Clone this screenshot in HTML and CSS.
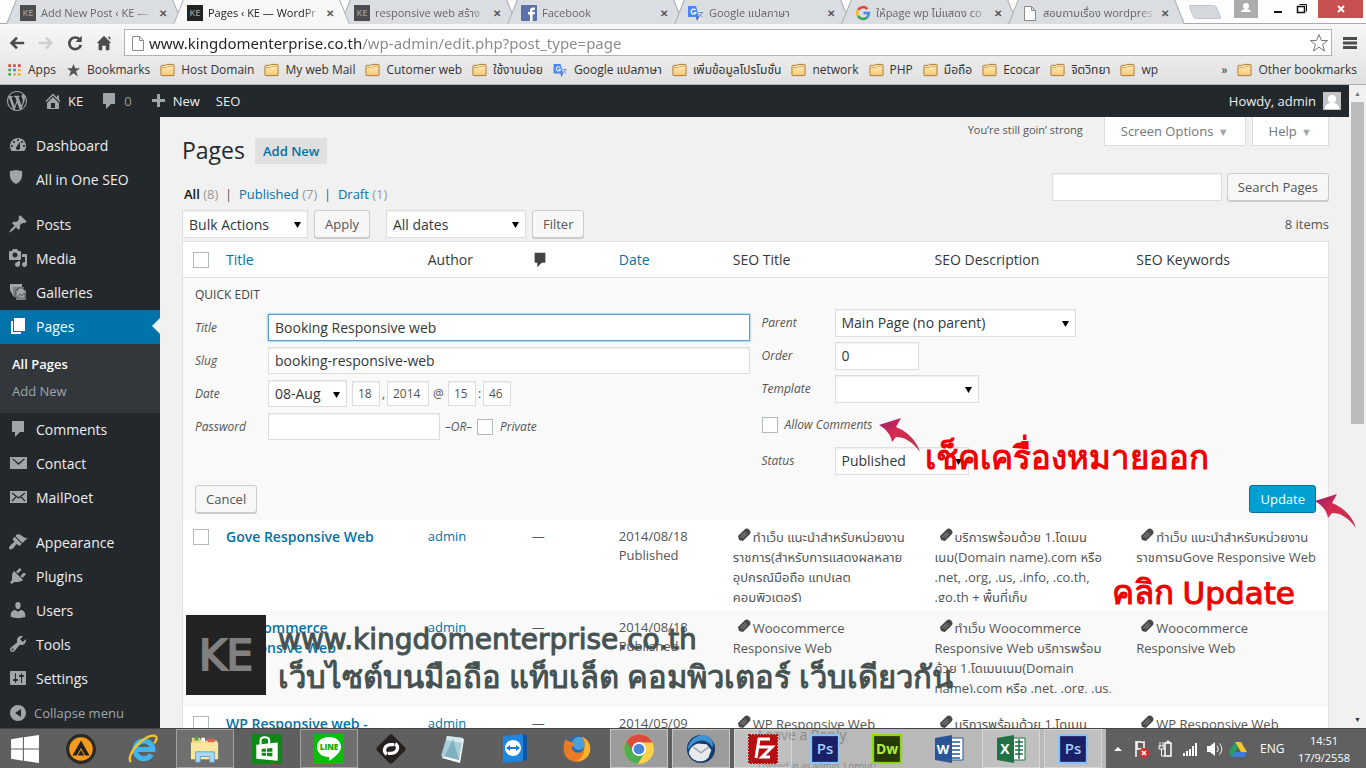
FILE: index.html
```
<!DOCTYPE html>
<html lang="th">
<head>
    <meta charset="UTF-8">
    <meta name="viewport" content="width=device-width, initial-scale=1.0">
    <title>Pages ‹ KE — WordPress</title>
    <link rel="stylesheet" href="styles.css">
</head>
<body>
    <!-- shared icons -->
    <svg class="sprite" aria-hidden="true">
        <defs>
            <linearGradient id="folder-fill" x1="0" y1="0" x2="0" y2="1">
                <stop offset="0" stop-color="#fff0c4"/>
                <stop offset="1" stop-color="#f9c873"/>
            </linearGradient>
            <linearGradient id="arrow-fill" x1="0" y1="0" x2="1" y2="1">
                <stop offset="0" stop-color="#8d1c74"/>
                <stop offset="0.4" stop-color="#d72b50"/>
                <stop offset="1" stop-color="#b8324a"/>
            </linearGradient>
            <symbol id="folder" viewBox="0 0 16 14">
                <path d="M1 12V3a1 1 0 0 1 1-1h4l1-1h7a1 1 0 0 1 1 1v10a1 1 0 0 1-1 1H2a1 1 0 0 1-1-1z" fill="url(#folder-fill)" stroke="#a9742b"/>
                <path d="M2 4.500h4.500l1.500-1.500h6" fill="none" stroke="#d9a04f"/>
            </symbol>
            <symbol id="file" viewBox="0 0 12 16">
                <path d="M.5 1.500h7l4 4v10H.5zM7.500 1.500v4h4" fill="#fff" stroke="#8a8a8a"/>
            </symbol>
            <symbol id="translate" viewBox="0 0 16 16">
                <path d="M7 5h8v10h-5z" fill="#dfe3ea"/>
                <path d="M0 1h8l3 11H1a1 1 0 0 1-1-1z" fill="#4a86f0"/>
                <path d="M8 12h3l-2 4z" fill="#2f5fc4"/>
                <path d="M7.500 5A2.500 2.500 0 1 0 8 7.500H5.700" fill="none" stroke="#fff" stroke-width="1.200"/>
                <path d="M10.500 7.500H15M12.800 7v1M14 8l-3 4M11.500 9l3 3" stroke="#6d8cc4" fill="none"/>
            </symbol>
            <symbol id="comment" viewBox="0 0 20 20">
                <path d="M5 2h10c1 0 1 .5 1 1v9c0 1 0 1-1 1h-3l-5 5v-5H5c-1 0-1-.5-1-1V3c0-1 0-1 1-1z" fill="currentColor"/>
            </symbol>
            <symbol id="clip" viewBox="0 0 14 14">
                <g transform="rotate(-45 7 7)">
                    <path d="M0 7l2-3.500h9a3.500 3.500 0 0 1 0 7H2z" fill="#484848"/>
                    <path d="M3 6h7M4 8h6" stroke="#ccc" stroke-width=".6"/>
                </g>
            </symbol>
            <symbol id="pointer" viewBox="0 0 44 36">
                <path d="M1 8L23 1l-5 9c10 4 20 12 24 25-8-11-16-15-24-15l-4 5c-1-7-6-13-13-17z" fill="url(#arrow-fill)"/>
            </symbol>
            <symbol id="photoshop" viewBox="0 0 28 28">
                <rect width="28" height="28" fill="#86c5fb"/>
                <rect x="2" y="2" width="24" height="24" fill="#1b1f66"/>
                <text x="14" y="19" text-anchor="middle" font-family="Open Sans" font-size="14" font-weight="600" fill="#9ed0ff">Ps</text>
            </symbol>
        </defs>
    </svg>

    <div class="screen">
        <!-- browser tabs -->
        <header class="tab-strip">
            <nav class="tabs" aria-label="Tabs">
                <a class="tab" href="#"><span class="favicon">KE</span><span class="tab-title">Add New Post ‹ KE —</span><span class="tab-close">✕</span></a>
                <a class="tab tab-active" href="#"><span class="favicon">KE</span><span class="tab-title">Pages ‹ KE — WordPr</span><span class="tab-close">✕</span></a>
                <a class="tab" href="#"><span class="favicon">KE</span><span class="tab-title">responsive web สร้าง</span><span class="tab-close">✕</span></a>
                <a class="tab" href="#"><svg class="favicon-svg" viewBox="0 0 16 16"><rect width="16" height="16" rx="1" fill="#5b71a9"/><path d="M9 16V9.500H7V7h2V5.500C9 3.500 10 2.500 12 2.500h2V5h-1.500c-.7 0-1 .3-1 1v1H14l-.4 2.500h-2V16z" fill="#fff"/></svg><span class="tab-title">Facebook</span><span class="tab-close">✕</span></a>
                <a class="tab" href="#"><svg class="favicon-svg"><use href="#translate"/></svg><span class="tab-title">Google แปลภาษา</span><span class="tab-close">✕</span></a>
                <a class="tab" href="#"><svg class="favicon-svg" viewBox="0 0 16 16" fill="none" stroke-width="2.500"><path d="M12.500 4A6 6 0 0 0 3 5" stroke="#e0443a"/><path d="M3 5a6 6 0 0 0 0 6" stroke="#f5b92e"/><path d="M3 11a6 6 0 0 0 9 1.500" stroke="#3aa757"/><path d="M12 12.500A6 6 0 0 0 13.800 8H8.500" stroke="#4a86f0"/></svg><span class="tab-title">ให้page wp ไม่แสดง co</span><span class="tab-close">✕</span></a>
                <a class="tab" href="#"><svg class="favicon-svg"><use href="#file"/></svg><span class="tab-title">สอบถามเรื่อง wordpres</span><span class="tab-close">✕</span></a>
                <button class="new-tab" aria-label="New tab"></button>
            </nav>
            <div class="window-buttons">
                <button class="win-user" aria-label="User"><svg viewBox="0 0 24 18"><circle cx="12" cy="6" r="3" fill="#fff"/><path d="M7 12c0-4 10-4 10 0z" fill="#fff"/></svg></button>
                <button aria-label="Minimize"><svg viewBox="0 0 24 18"><path d="M8 12h8" stroke="#111" stroke-width="2"/></svg></button>
                <button aria-label="Restore"><svg viewBox="0 0 24 18" fill="none" stroke="#111"><path d="M7.500 6.500h7v6h-7z" stroke-width="1.500"/><path d="M9.500 4.500h7v7"/></svg></button>
                <button class="win-close" aria-label="Close"><svg viewBox="0 0 24 18"><path d="M9 6l6 6M15 6l-6 6" stroke="#fff" stroke-width="2"/></svg></button>
            </div>
        </header>

        <div class="toolbar">
            <button aria-label="Back"><svg viewBox="0 0 20 20" fill="none" stroke="#4c4c4c" stroke-width="3"><path d="M18 10H4M10 4l-6 6 6 6"/></svg></button>
            <button aria-label="Forward"><svg viewBox="0 0 20 20" fill="none" stroke="#cfcfcf" stroke-width="3"><path d="M2 10h14M10 4l6 6-6 6"/></svg></button>
            <button aria-label="Reload"><svg viewBox="0 0 20 20"><path d="M15 6a6.500 6.500 0 1 0 1.500 6" fill="none" stroke="#4c4c4c" stroke-width="3"/><path d="M17.500 2v7h-7z" fill="#4c4c4c"/></svg></button>
            <button aria-label="Home"><svg viewBox="0 0 20 20"><path d="M10 2l8 8h-2v8h-4v-5H8v5H4v-8H2zM14 3h3v4z" fill="#4c4c4c"/></svg></button>
            <div class="omnibox">
                <svg class="page-icon"><use href="#file"/></svg>
                <input type="text" class="address" aria-label="Address" value="www.kingdomenterprise.co.th/wp-admin/edit.php?post_type=page">
                <svg class="star" viewBox="0 0 20 20"><path d="M10 1.500l2.400 6h6.200l-5 4 1.900 6.500L10 14.200 4.500 18l1.900-6.500-5-4h6.200z" fill="#fff" stroke="#777"/></svg>
            </div>
            <button class="menu-button" aria-label="Menu"><svg viewBox="0 0 14 14"><path d="M0 2.500h14M0 7h14M0 11.500h14" stroke="#4c4c4c" stroke-width="3"/></svg></button>
        </div>

        <nav class="bookmarks" aria-label="Bookmarks">
            <a href="#"><svg viewBox="0 0 16 16"><path d="M1 3h3M6.500 3h3M12 3h3" stroke="#d9453d" stroke-width="3"/><path d="M1 8h3" stroke="#3aa757" stroke-width="3"/><path d="M6.500 8h3" stroke="#3d7de0" stroke-width="3"/><path d="M12 8h3" stroke="#f0b02c" stroke-width="3"/><path d="M1 13h3" stroke="#3aa757" stroke-width="3"/><path d="M6.500 13h3M12 13h3" stroke="#f0b02c" stroke-width="3"/></svg>Apps</a>
            <a href="#"><svg viewBox="0 0 16 16"><path d="M8 1l2 5h5.500L11 9.500l2 6-5-3.700-5 3.700 2-6L.5 6H6z" fill="#555"/></svg>Bookmarks</a>
            <a href="#"><svg><use href="#folder"/></svg>Host Domain</a>
            <a href="#"><svg><use href="#folder"/></svg>My web Mail</a>
            <a href="#"><svg><use href="#folder"/></svg>Cutomer web</a>
            <a href="#"><svg><use href="#folder"/></svg>ใช้งานบ่อย</a>
            <a href="#"><svg><use href="#translate"/></svg>Google แปลภาษา</a>
            <a href="#"><svg><use href="#folder"/></svg>เพิ่มข้อมูลโปรโมชั่น</a>
            <a href="#"><svg><use href="#folder"/></svg>network</a>
            <a href="#"><svg><use href="#folder"/></svg>PHP</a>
            <a href="#"><svg><use href="#folder"/></svg>มือถือ</a>
            <a href="#"><svg><use href="#folder"/></svg>Ecocar</a>
            <a href="#"><svg><use href="#folder"/></svg>จิตวิทยา</a>
            <a href="#"><svg><use href="#folder"/></svg>wp</a>
            <a class="more" href="#">»</a>
            <a class="other" href="#"><svg><use href="#folder"/></svg>Other bookmarks</a>
        </nav>

        <div class="viewport">
            <div class="admin">
                <div class="admin-bar">
                    <a href="#" aria-label="WordPress"><svg viewBox="0 0 20 20"><path d="M20 10c0-5.510-4.490-10-10-10C4.480 0 0 4.490 0 10c0 5.520 4.480 10 10 10 5.510 0 10-4.480 10-10zM7.780 15.370L4.370 6.220c.55-.02 1.170-.08 1.170-.08.5-.06.44-1.130-.06-1.110 0 0-1.450.11-2.370.11-.18 0-.37 0-.58-.01C4.120 2.690 6.870 1.110 10 1.110c2.330 0 4.450.87 6.050 2.340-.68-.11-1.650.39-1.650 1.580 0 .74.45 1.360.9 2.100.35.61.55 1.360.55 2.460 0 1.490-1.400 5-1.400 5l-3.030-8.370c.54-.02.82-.17.82-.17.5-.05.44-1.250-.06-1.220 0 0-1.440.12-2.380.12-.87 0-2.330-.12-2.330-.12-.5-.03-.56 1.200-.06 1.220l.92.08 1.260 3.410zM17.410 10c.24-.64.74-1.870.43-4.250.7 1.290 1.050 2.710 1.050 4.250 0 3.290-1.730 6.240-4.400 7.780.97-2.590 1.940-5.200 2.920-7.780zM6.100 18.090C3.120 16.650 1.110 13.530 1.110 10c0-1.300.23-2.480.72-3.590C3.250 10.300 4.670 14.200 6.100 18.090zm4.030-6.630l2.580 6.980c-.86.29-1.760.45-2.710.45-.79 0-1.570-.11-2.290-.33.81-2.380 1.620-4.740 2.420-7.100z"/></svg></a>
                    <a href="#"><svg viewBox="0 0 20 20"><path d="M16 8.500l1.530 1.530-1.060 1.060L10 4.600l-6.470 6.490-1.060-1.060L10 2.500l4 4v-2h2v4zm-6-2.460l6 5.990V18H4v-5.970zM12 17v-5H8v5h4z"/></svg>KE</a>
                    <a class="muted" href="#"><svg><use href="#comment"/></svg>0</a>
                    <a href="#"><svg viewBox="0 0 20 20"><path d="M17 8v3h-5v5H9v-5H4V8h5V3h3v5z"/></svg>New</a>
                    <a href="#">SEO</a>
                    <a class="howdy" href="#">Howdy, admin<svg class="avatar" viewBox="0 0 18 18"><rect width="18" height="18" fill="#c4c4c4"/><circle cx="9" cy="7" r="4" fill="#fff"/><path d="M2 17c0-5 3-6 7-6s7 1 7 6z" fill="#fff"/></svg></a>
                </div>

                <div class="admin-body">
                    <nav class="sidebar" aria-label="Admin menu">
                        <a href="#"><svg viewBox="0 0 20 20"><path d="M3.760 16h12.480c1.100-1.370 1.760-3.110 1.760-5 0-4.420-3.580-8-8-8s-8 3.580-8 8c0 1.890.66 3.630 1.760 5zM10 4c.55 0 1 .45 1 1s-.45 1-1 1-1-.45-1-1 .45-1 1-1zM6 6c.55 0 1 .45 1 1s-.45 1-1 1-1-.45-1-1 .45-1 1-1zm8 0c.55 0 1 .45 1 1s-.45 1-1 1-1-.45-1-1 .45-1 1-1zm-5.370 5.550L12 7v6c0 1.100-.9 2-2 2s-2-.9-2-2c0-.57.24-1.080.63-1.450zM4 10c.55 0 1 .45 1 1s-.45 1-1 1-1-.45-1-1 .45-1 1-1zm12 0c.55 0 1 .45 1 1s-.45 1-1 1-1-.45-1-1 .45-1 1-1z"/></svg>Dashboard</a>
                        <a href="#"><svg viewBox="0 0 20 20"><path d="M2 2c3 0 4-1 6-1s3 1 6 1c1 6-1 11-6 13C3 13 1 8 2 2z"/></svg>All in One SEO</a>
                        <a class="group" href="#"><svg viewBox="0 0 20 20"><path d="M10.440 3.020l1.820-1.820 6.360 6.350-1.830 1.820c-1.050-.68-2.480-.57-3.410.36l-.75.75c-.92.93-1.040 2.350-.35 3.410l-1.830 1.820-2.410-2.410-2.800 2.790c-.42.42-3.380 2.710-3.800 2.290s1.860-3.390 2.280-3.810l2.790-2.790L4.100 9.360l1.830-1.820c1.050.69 2.480.57 3.400-.36l.75-.75c.93-.92 1.050-2.350.36-3.410z"/></svg>Posts</a>
                        <a href="#"><svg viewBox="0 0 20 20"><path d="M13 11V4c0-.55-.45-1-1-1h-1.670L9 1H5L3.670 3H2c-.55 0-1 .45-1 1v7c0 .55.45 1 1 1h10c.55 0 1-.45 1-1zM7 4.500c1.380 0 2.500 1.120 2.500 2.500S8.380 9.500 7 9.500 4.500 8.380 4.500 7 5.620 4.500 7 4.500zM14 6h5v10.500c0 1.380-1.120 2.500-2.500 2.500S14 17.880 14 16.500s1.120-2.500 2.500-2.500c.17 0 .34.02.5.05V9h-3V6zm-4 8.050V13h2v3.500c0 1.380-1.120 2.500-2.500 2.500S7 17.880 7 16.500 8.120 14 9.500 14c.17 0 .34.02.5.05z"/></svg>Media</a>
                        <a href="#"><svg viewBox="0 0 20 20"><path d="M2 2h12v3H5v9l-3-6z"/><path d="M5 5h11v3H8v8l-3-2z" opacity=".7"/><path d="M8 8h2V6h5l1 2h2v10H8zm1 8l3-4 2 2 2-3 1 2v3z" stroke="#23282d" stroke-width=".6"/></svg>Galleries</a>
                        <a class="current" href="#"><svg viewBox="0 0 20 20"><path d="M6 15V2h11v13H6zm-1 1h8v2H3V5h2v11z"/></svg>Pages</a>
                        <div class="submenu">
                            <a class="selected" href="#">All Pages</a>
                            <a href="#">Add New</a>
                        </div>
                        <a href="#"><svg><use href="#comment"/></svg>Comments</a>
                        <a href="#"><svg viewBox="0 0 20 20"><path d="M2 4h17v12H2zM4 6l6.500 6L17 6l-1-.5-5.500 4.500L5 5.500z" fill-rule="evenodd"/></svg>Contact</a>
                        <a href="#"><svg viewBox="0 0 20 20"><path d="M2 4h17v12H2z"/><path d="M4 6l6.500 5L17 6M4 14l4-4M17 14l-4-4" fill="none" stroke="#23282d" stroke-width="1.200"/></svg>MailPoet</a>
                        <a class="group" href="#"><svg viewBox="0 0 20 20"><path d="M14.480 11.060L7.410 3.990l1.500-1.500c.5-.56 2.300-.47 3.510.32 1.210.8 1.430 1.280 2.910 2.100 1.180.64 2.450 1.260 4.450.85zm-.71.71L6.700 4.700 4.930 6.470c-.39.39-.39 1.020 0 1.410l1.060 1.060c.39.39.39 1.030 0 1.420-.6.6-1.430 1.110-2.210 1.690-.35.26-.7.53-1.010.84C1.430 14.230.4 16.080 1.400 17.070c.99 1 2.840-.03 4.180-1.360.31-.31.58-.66.85-1.020.57-.78 1.080-1.610 1.690-2.210.39-.39 1.020-.39 1.410 0l1.060 1.060c.39.39 1.020.39 1.410 0z"/></svg>Appearance</a>
                        <a href="#"><svg viewBox="0 0 20 20"><path d="M13.110 4.360L9.870 7.600 8 5.730l3.240-3.240c.35-.34 1.050-.2 1.560.32.52.51.66 1.210.31 1.550zm-8 1.770l.91-1.120 9.010 9.010-1.190.84c-.71.71-2.630 1.160-3.820 1.160H6.140L4.900 17.260c-.59.59-1.540.59-2.120 0-.59-.58-.59-1.530 0-2.120l1.240-1.240v-3.880c0-1.130.4-3.190 1.090-3.890zm7.260 3.970l3.240-3.240c.34-.35 1.040-.21 1.550.31.52.51.66 1.210.31 1.550l-3.240 3.250z"/></svg>Plugins</a>
                        <a href="#"><svg viewBox="0 0 20 20"><path d="M10 9.250c-2.270 0-2.730-3.440-2.730-3.440C7 4.020 7.820 2 9.970 2c2.160 0 2.980 2.020 2.710 3.810 0 0-.41 3.440-2.680 3.440zm0 2.570L12.720 10c2.390 0 4.520 2.330 4.520 4.530v2.490s-3.650 1.130-7.240 1.130c-3.650 0-7.240-1.130-7.240-1.130v-2.490c0-2.250 1.940-4.480 4.470-4.480z"/></svg>Users</a>
                        <a href="#"><svg viewBox="0 0 20 20"><path d="M16.680 9.770c-1.340 1.340-3.300 1.670-4.950.99l-5.410 6.520c-.99.99-2.590.99-3.580 0s-.99-2.590 0-3.570l6.520-5.420c-.68-1.650-.35-3.610.99-4.950 1.280-1.280 3.120-1.620 4.720-1.060l-2.890 2.890 2.820 2.820 2.860-2.870c.53 1.580.18 3.390-1.080 4.650zM3.810 16.210c.4.39 1.040.39 1.430 0 .4-.4.4-1.040 0-1.430-.39-.4-1.030-.4-1.430 0-.39.39-.39 1.030 0 1.430z"/></svg>Tools</a>
                        <a href="#"><svg viewBox="0 0 20 20"><path d="M18 16V4c0-.55-.45-1-1-1H3c-.55 0-1 .45-1 1v12c0 .55.45 1 1 1h14c.55 0 1-.45 1-1zM8 11h1c.55 0 1 .45 1 1s-.45 1-1 1H8v1.500c0 .28-.22.5-.5.5s-.5-.22-.5-.5V13H6c-.55 0-1-.45-1-1s.45-1 1-1h1V5.500c0-.28.22-.5.5-.5s.5.22.5.5V11zm5-2h-1c-.55 0-1-.45-1-1s.45-1 1-1h1V5.500c0-.28.22-.5.5-.5s.5.22.5.5V7h1c.55 0 1 .45 1 1s-.45 1-1 1h-1v5.500c0 .28-.22.5-.5.5s-.5-.22-.5-.5V9z"/></svg>Settings</a>
                        <a class="collapse" href="#"><svg viewBox="0 0 20 20"><path d="M10 2a8 8 0 1 0 0 16 8 8 0 0 0 0-16zm3 4v8l-6-4z" fill-rule="evenodd"/></svg>Collapse menu</a>
                    </nav>

                    <main class="content">
                        <div class="page-head">
                            <h1>Pages</h1>
                            <a class="add-new" href="#">Add New</a>
                            <p class="greeting">You’re still goin’ strong</p>
                            <button class="meta-link">Screen Options <span>▼</span></button>
                            <button class="meta-link">Help <span>▼</span></button>
                        </div>

                        <div class="filters">
                            <p class="views"><a class="all" href="#">All</a> <span>(8)</span>&nbsp; | &nbsp;<a href="#">Published</a> <span>(7)</span>&nbsp; | &nbsp;<a href="#">Draft</a> <span>(1)</span></p>
                            <input type="text" class="field search" aria-label="Search Pages">
                            <button class="button">Search Pages</button>
                        </div>

                        <div class="table-nav">
                            <select class="field bulk" aria-label="Bulk Actions"><option>Bulk Actions</option></select>
                            <button class="button">Apply</button>
                            <select class="field dates" aria-label="Dates"><option>All dates</option></select>
                            <button class="button">Filter</button>
                            <span class="count">8 items</span>
                        </div>

                        <table class="pages">
                            <thead>
                                <tr>
                                    <th class="col-check"><input type="checkbox" aria-label="Select all"></th>
                                    <th><a href="#">Title</a></th>
                                    <th class="col-author">Author</th>
                                    <th class="col-comments"><svg class="th-comment"><use href="#comment"/></svg></th>
                                    <th class="col-date"><a href="#">Date</a></th>
                                    <th>SEO Title</th>
                                    <th>SEO Description</th>
                                    <th>SEO Keywords</th>
                                </tr>
                            </thead>
                            <tbody>
                                <tr class="quick-edit">
                                    <td colspan="8">
                                        <form>
                                            <div class="edit-columns">
                                                <div class="edit-left">
                                                    <h2>QUICK EDIT</h2>
                                                    <div class="edit-row"><label for="q-title">Title</label><input id="q-title" type="text" class="field wide focused" value="Booking Responsive web"></div>
                                                    <div class="edit-row"><label for="q-slug">Slug</label><input id="q-slug" type="text" class="field wide" value="booking-responsive-web"></div>
                                                    <div class="edit-row date-row"><label for="q-month">Date</label><select id="q-month" class="field month"><option>08-Aug</option></select><input type="text" class="field two" aria-label="Day" value="18"><span>,</span><input type="text" class="field four" aria-label="Year" value="2014"><span class="at">@</span><input type="text" class="field two" aria-label="Hour" value="15"><span>:</span><input type="text" class="field two" aria-label="Minute" value="46"></div>
                                                    <div class="edit-row"><label for="q-pass">Password</label><input id="q-pass" type="text" class="field password"><em>–OR–</em><input id="q-private" type="checkbox"><label class="after" for="q-private">Private</label></div>
                                                </div>
                                                <div class="edit-right">
                                                    <div class="edit-row"><label for="q-parent">Parent</label><select id="q-parent" class="field parent"><option>Main Page (no parent)</option></select></div>
                                                    <div class="edit-row"><label for="q-order">Order</label><input id="q-order" type="text" class="field order" value="0"></div>
                                                    <div class="edit-row"><label for="q-template">Template</label><select id="q-template" class="field template"><option></option></select></div>
                                                    <div class="edit-row allow-row"><input id="q-allow" type="checkbox"><label class="after" for="q-allow">Allow Comments</label></div>
                                                    <div class="edit-row"><label for="q-status">Status</label><select id="q-status" class="field status"><option>Published</option></select></div>
                                                </div>
                                            </div>
                                            <div class="edit-actions">
                                                <button type="button" class="button">Cancel</button>
                                                <button type="button" class="button primary">Update</button>
                                            </div>
                                        </form>
                                    </td>
                                </tr>
                                <tr>
                                    <td><input type="checkbox" aria-label="Select Gove Responsive Web"></td>
                                    <td><a class="row-title" href="#">Gove Responsive Web</a></td>
                                    <td><a href="#">admin</a></td>
                                    <td>—</td>
                                    <td>2014/08/18<br>Published</td>
                                    <td><div class="seo"><svg><use href="#clip"/></svg>ทำเว็บ แนะนำสำหรับหน่วยงาน<br>ราชการ(สำหรับการแสดงผลหลาย<br>อุปกรณ์มือถือ แทปเลต<br>คอมพิวเตอร์)</div></td>
                                    <td><div class="seo"><svg><use href="#clip"/></svg>บริการพร้อมด้วย 1.โดเมน<br>เนม(Domain name).com หรือ<br>.net, .org, .us, .info, .co.th,<br>.go.th + พื้นที่เก็บ</div></td>
                                    <td><div class="seo"><svg><use href="#clip"/></svg>ทำเว็บ แนะนำสำหรับหน่วยงาน<br>ราชการมGove Responsive Web</div></td>
                                </tr>
                                <tr class="alternate">
                                    <td><input type="checkbox" aria-label="Select Woocommerce Responsive Web"></td>
                                    <td><a class="row-title" href="#">Woocommerce<br>Responsive Web</a></td>
                                    <td><a href="#">admin</a></td>
                                    <td>—</td>
                                    <td>2014/08/18<br>Published</td>
                                    <td><div class="seo"><svg><use href="#clip"/></svg>Woocommerce<br>Responsive Web</div></td>
                                    <td><div class="seo"><svg><use href="#clip"/></svg>ทำเว็บ Woocommerce<br>Responsive Web บริการพร้อม<br>ด้วย 1.โดเมนเนม(Domain<br>name).com หรือ .net, .org, .us,</div></td>
                                    <td><div class="seo"><svg><use href="#clip"/></svg>Woocommerce<br>Responsive Web</div></td>
                                </tr>
                                <tr>
                                    <td><input type="checkbox" aria-label="Select WP Responsive web"></td>
                                    <td><a class="row-title" href="#">WP Responsive web -</a></td>
                                    <td><a href="#">admin</a></td>
                                    <td>—</td>
                                    <td>2014/05/09</td>
                                    <td><div class="seo"><svg><use href="#clip"/></svg>WP Responsive Web</div></td>
                                    <td><div class="seo"><svg><use href="#clip"/></svg>บริการพร้อมด้วย 1.โดเมน</div></td>
                                    <td><div class="seo"><svg><use href="#clip"/></svg>WP Responsive Web</div></td>
                                </tr>
                            </tbody>
                        </table>
                    </main>
                </div>
            </div>
            <div class="scrollbar"><span>▲</span><div class="thumb"></div><span class="down">▼</span></div>
        </div>

        <!-- windows taskbar -->
        <footer class="taskbar">
            <button class="start" aria-label="Start"><svg viewBox="0 0 28 28"><path d="M1 5l11-2v10.500H1zM13 3l14-2v12.500H13zM1 14.500h11V25L1 23zM13 14.500h14V27l-14-2z" fill="#fff"/></svg></button>
            <button class="task" aria-label="AIMP"><svg viewBox="0 0 28 28"><circle cx="14" cy="14" r="14" fill="#2d2925"/><circle cx="14" cy="14" r="11" fill="#f69a1e"/><path d="M14 6l8 14h-4l-4-7-4 7H6z" fill="#222"/><path d="M11 20l3-5 3 5z" fill="#222"/></svg></button>
            <button class="task" aria-label="Internet Explorer"><svg viewBox="0 0 32 32"><path d="M25 22a9.500 9.500 0 1 1 1.500-5.500H9" fill="none" stroke="#42b4ef" stroke-width="5.500"/><path d="M3 30C-3 22 18-1 29 2c3 2 1 5-1 8" fill="none" stroke="#f3c52c" stroke-width="2.500"/></svg></button>
            <button class="task open" aria-label="Explorer"><svg viewBox="0 0 32 30"><path d="M2 3h8l2 3h17v19H2z" fill="#f0d27c"/><path d="M5 2h4v4H5z" fill="#3aa757"/><path d="M12 3h4v4h-4z" fill="#fff"/><path d="M19 4h7v4h-7z" fill="#e3644b"/><path d="M1 8h29v18H1z" fill="#fbe6a0"/><path d="M6 29V18h20v11h-5v-6H11v6z" fill="#a9d8f2" stroke="#62a4cc"/></svg></button>
            <button class="task" aria-label="Store"><svg viewBox="0 0 28 28"><rect width="28" height="28" fill="#0d8a16"/><path d="M4 10l20-2v17L4 23z" fill="#fff"/><path d="M8 10V6c0-4 8-4 8 0v3" fill="none" stroke="#fff" stroke-width="2"/><path d="M9 14l4-.5v3H9zM14 13.500l5-.5v3.500h-5zM9 17.500h4v3L9 20zM14 17.500h5V21l-5-.5z" fill="#0d8a16"/></svg></button>
            <button class="task open" aria-label="LINE"><svg viewBox="0 0 30 30"><rect width="30" height="30" fill="#0bbd0b"/><path d="M15 3c7 0 12 4 12 10 0 5-5 9-12 14v-4C8 23 3 19 3 13S8 3 15 3z" fill="#fff"/><text x="15" y="16" text-anchor="middle" font-family="Open Sans" font-size="8" font-weight="800" fill="#0aa80a">LINE</text></svg></button>
            <button class="task" aria-label="Sync"><svg viewBox="0 0 28 28"><path d="M14 3l11 11-11 11L3 14z" fill="#25211f" stroke="#25211f" stroke-width="5" stroke-linejoin="round"/><path d="M10 19c-4-3-2-9 4-9h3" fill="none" stroke="#fff" stroke-width="3"/><path d="M18 9c4 3 2 9-4 9h-3" fill="none" stroke="#fff" stroke-width="3"/></svg></button>
            <button class="task" aria-label="Notepad"><svg viewBox="0 0 28 30"><path d="M9 3l16 2-4 24-18-5z" fill="#fff"/><path d="M8 2l16 2-4 22-18-4z" fill="#a9cdd6"/><path d="M8 2l16 2-1 5-16-3z" fill="#d4e9ed"/><path d="M14 5l-8 17 14 4z" fill="#7fb1bf"/></svg></button>
            <button class="task" aria-label="TeamViewer"><svg viewBox="0 0 28 30"><path d="M2 2l20-2v27L2 29z" fill="#1f86e0"/><path d="M22 0l4 2v24l-4 1z" fill="#0a56a5"/><circle cx="12" cy="14" r="8" fill="#fff"/><path d="M5 14l4-3v2h6v-2l4 3-4 3v-2H9v2z" fill="#1f7ad0"/></svg></button>
            <button class="task" aria-label="Firefox"><svg viewBox="0 0 32 32"><circle cx="17" cy="15" r="13" fill="#2c67ad"/><circle cx="18" cy="10" r="7" fill="#4aa0dd"/><path d="M4 5c1 3 4 2 7 4l3 1-4 4c3 9 12 7 14 0 1-5-2-9-3-11 8 3 11 11 8 18-4 10-18 12-25 3C0 17 2 10 4 5z" fill="#eb7a22"/><path d="M24 14c2-5-1-9-3-11 8 3 11 11 8 18-3 6-9 8-14 8 7-3 9-9 9-15z" fill="#f8b62c"/></svg></button>
            <button class="task active" aria-label="Chrome"><svg viewBox="0 0 28 28"><circle cx="14" cy="14" r="14" fill="#fcd04b"/><path d="M14 14L2 7a14 14 0 0 0 11 21l6-10z" fill="#4fae52"/><path d="M14 8h12.600a14 14 0 0 0-24.500-1l6 8z" fill="#dd4a3e"/><circle cx="14" cy="14" r="6.500" fill="#fff"/><circle cx="14" cy="14" r="5" fill="#4a86d8"/></svg></button>
            <button class="task active" aria-label="Thunderbird"><svg viewBox="0 0 32 32"><circle cx="16" cy="16" r="15" fill="#173a68"/><path d="M16 1C7 3 2 10 2 17c4-6 8-9 14-10 6 0 10 3 12 8 3-6-3-15-12-14z" fill="#3b92d4"/><path d="M3 20c3 10 15 12 21 5l3-8-5-6-9-1c-5 1-9 5-10 10z" fill="#e7ebed"/><path d="M8 14l8 6 8-6" fill="none" stroke="#98a5ad" stroke-width="1.500"/></svg></button>
            <div class="light-group">
                <p class="ghost">Leave a Reply</p>
                <p class="ghost ghost-low">Logged in as admin. Logout?</p>
                <button class="task open" aria-label="FileZilla"><svg viewBox="0 0 30 30"><rect x="1" y="1" width="28" height="28" fill="#b50f0f" stroke="#b50f0f" stroke-width="2" stroke-dasharray="2 1"/><path d="M8 24L11 5h11M10 13h8M14 13h10L14 23h8" fill="none" stroke="#fff" stroke-width="3"/></svg></button>
                <button class="task" aria-label="Photoshop"><svg><use href="#photoshop"/></svg></button>
                <button class="task" aria-label="Dreamweaver"><svg viewBox="0 0 28 28"><rect width="28" height="28" fill="#8fd813"/><rect x="2" y="2" width="24" height="24" fill="#26390b"/><text x="14" y="19" text-anchor="middle" font-family="Open Sans" font-size="13" font-weight="700" fill="#b4f03a">Dw</text></svg></button>
                <button class="task" aria-label="Word"><svg viewBox="0 0 30 30"><path d="M15 4h14v22H15z" fill="#fff" stroke="#2a5699"/><path d="M18 8h8M18 12h8M18 16h8M18 20h8M18 24h8" stroke="#2a5699" stroke-width="1.500"/><path d="M1 4l17-3v28L1 26z" fill="#2a5699"/><text x="9" y="20" text-anchor="middle" font-family="Open Sans" font-size="13" font-weight="700" fill="#fff">W</text></svg></button>
                <button class="task open" aria-label="Excel"><svg viewBox="0 0 30 30"><path d="M15 4h14v22H15z" fill="#fff" stroke="#207245"/><path d="M19 8h8M19 12h8M19 16h8M19 20h8M23 5v20" stroke="#207245" stroke-width="1.500"/><path d="M1 4l17-3v28L1 26z" fill="#207245"/><text x="9" y="20" text-anchor="middle" font-family="Open Sans" font-size="14" font-weight="700" fill="#fff">X</text></svg></button>
                <button class="task open" aria-label="Photoshop"><svg><use href="#photoshop"/></svg></button>
            </div>
            <div class="tray">
                <svg viewBox="0 0 20 20"><path d="M6 12l4-4 4 4z" fill="#fff"/></svg>
                <svg viewBox="0 0 20 20"><path d="M4 2v16" stroke="#fff" stroke-width="1.500"/><path d="M5 3c3-1 4 1 7 0v7c-3 1-4-1-7 0z" fill="none" stroke="#fff" stroke-width="1.500"/><circle cx="12" cy="14" r="5" fill="#d8302f"/><path d="M10 12l4 4M14 12l-4 4" stroke="#fff" stroke-width="1.500"/></svg>
                <svg viewBox="0 0 20 20"><path d="M9 4h6v13H9zM10.500 2.500h3" fill="none" stroke="#fff" stroke-width="1.500"/><path d="M4 3v4M7 3v4M3 7h5v3H3zM5.500 10v7H9" stroke="#fff" fill="none"/></svg>
                <svg viewBox="0 0 20 20"><path d="M4 17v-3M7 17v-5M10 17v-7M13 17V7M16 17V4" stroke="#fff" stroke-width="2"/></svg>
                <svg viewBox="0 0 20 20"><path d="M3 7h3l5-4v14l-5-4H3z" fill="#fff"/><path d="M13 7c1.500 2 1.500 4 0 6M15.500 4.500c3 3.500 3 7.500 0 11" fill="none" stroke="#fff"/></svg>
                <svg viewBox="0 0 20 20"><path d="M7 3h6l6 10h-6z" fill="#f6c52d"/><path d="M7 3l3 5-6 10-3-5z" fill="#26a065"/><path d="M7 13h12l-3 5H4z" fill="#3d7de0"/></svg>
                <span class="lang">ENG</span>
                <time class="clock">14:51<br>17/9/2558</time>
            </div>
        </footer>

        <!-- notes laid over the window -->
        <svg class="pointer pointer-allow"><use href="#pointer"/></svg>
        <svg class="pointer pointer-update"><use href="#pointer"/></svg>
        <p class="note note-allow">เช็คเครื่องหมายออก</p>
        <p class="note note-update">คลิก <span>Update</span></p>
        <div class="watermark">
            <div class="watermark-logo">KE</div>
            <div class="watermark-text">
                <p class="site">www.kingdomenterprise.co.th</p>
                <p>เว็บไซต์บนมือถือ แท็บเล็ต คอมพิวเตอร์ เว็บเดียวกัน</p>
            </div>
        </div>
    </div>
</body>
</html>
```
FILE: styles.css
```
*{
    box-sizing: border-box;
}

body{
    margin: 0;
    font-family: "Open Sans", "Noto Sans", "Noto Sans Thai", sans-serif;
    font-size: 13px;
    color: #555;
}

h1, h2, p{
    margin: 0;
    font-weight: 400;
}

a{
    color: #0073aa;
    text-decoration: none;
}

button, input, select{
    font-family: inherit;
    margin: 0;
}

button{
    border: 0;
    padding: 0;
    background: none;
}

svg{
    display: block;
    flex: none;
}

.sprite{
    position: absolute;
    width: 0;
    height: 0;
}

.screen{
    position: relative;
    display: flex;
    flex-direction: column;
    height: 100vh;
    overflow: hidden;
}

/* ---------- tabs ---------- */
.tab-strip{
    display: flex;
    justify-content: space-between;
    height: 24px;
    flex: none;
    background: #fdfdfd;
    border-bottom: 1px solid #a9abad;
}

.tabs{
    display: flex;
    flex: 1;
    min-width: 0;
    padding-left: 6px;
}

.tab{
    position: relative;
    display: flex;
    align-items: center;
    gap: 5px;
    flex: 0 1 177px;
    min-width: 0;
    margin-right: -10px;
    height: 24px;
    padding: 2px 13px 0 14px;
    color: #666;
    font-size: 11px;
}

.tab::before, .tab::after{
    content: "";
    position: absolute;
    top: 0;
    bottom: 0;
    background: #dadee3;
    z-index: 0;
}
.tab::before{
    left: 5px;
    right: 50%;
    border-left: 1px solid #a9abad;
    transform: skewX(-22deg);
}
.tab::after{
    left: 45%;
    right: 5px;
    border-right: 1px solid #a9abad;
    transform: skewX(22deg);
}

.tab-active{
    z-index: 1;
    color: #222;
}
.tab-active::before, .tab-active::after{
    background: #f7f7f7;
}

.tab > *{
    position: relative;
    z-index: 1;
}

.favicon{
    flex: none;
    width: 16px;
    height: 16px;
    background: #4c4c4e;
    color: #999;
    font-size: 9px;
    font-weight: 600;
    line-height: 16px;
    text-align: center;
}
.tab-active .favicon{
    background: #222;
}

.favicon-svg{
    width: 16px;
    height: 16px;
}

.tab-title{
    flex: 1;
    min-width: 0;
    overflow: hidden;
    white-space: nowrap;
    line-height: 20px;
    mask-image: linear-gradient(90deg, #000 85%, transparent);
}

.tab-close{
    flex: none;
    width: 11px;
    font-size: 10px;
    font-weight: 700;
    color: #555;
}

.new-tab{
    width: 28px;
    height: 14px;
    margin: 5px 0 0 16px;
    background: #d5d9de;
    border: 1px solid #c2c6ca;
    border-radius: 3px;
    transform: skewX(22deg);
}

.window-buttons{
    display: flex;
    padding-right: 3px;
}
.window-buttons button{
    height: 18px;
}
.window-buttons svg{
    width: 24px;
    height: 18px;
    margin: auto;
}
.window-buttons .win-user{
    background: #acacac;
    margin-right: 8px;
}
.window-buttons .win-close{
    width: 45px;
    margin-left: 4px;
    background: #c75050;
}

/* ---------- toolbar and bookmarks ---------- */
.toolbar{
    display: flex;
    align-items: center;
    gap: 11px;
    height: 35px;
    flex: none;
    padding: 2px 9px 0 8px;
    background: linear-gradient(#f7f7f7, #ebebeb);
}
.toolbar button svg{
    width: 18px;
    height: 18px;
}
.toolbar .menu-button svg{
    width: 14px;
    height: 14px;
}

.omnibox{
    display: flex;
    align-items: center;
    flex: 1;
    height: 27px;
    padding: 0 2px 0 7px;
    background: #fff;
    border: 1px solid #b3b3b3;
}
.page-icon{
    width: 12px;
    height: 16px;
}
.star{
    width: 20px;
    height: 20px;
}

/* the host is dark and the path is grey */
.address{
    flex: 1;
    border: 0;
    padding: 0;
    margin-left: 5px;
    height: 24px;
    font-family: "Noto Sans", sans-serif;
    font-size: 15px;
    color: transparent;
    background: linear-gradient(90deg, #222 214px, #888 214px);
    background-clip: text;
    -webkit-background-clip: text;
}

.bookmarks{
    display: flex;
    align-items: center;
    gap: 10px;
    height: 26px;
    flex: none;
    padding: 0 9px 3px 7px;
    background: linear-gradient(#ebebeb, #e0e0e0);
    border-bottom: 1px solid #b0b0b0;
}
.bookmarks a{
    display: flex;
    align-items: center;
    gap: 6px;
    font-size: 12px;
    line-height: 20px;
    white-space: nowrap;
    color: #333;
}
.bookmarks svg{
    width: 15px;
    height: 14px;
}
.bookmarks .more{
    margin-left: auto;
}

/* ---------- page area ---------- */
.viewport{
    display: flex;
    flex: 1;
    min-height: 0;
}

.admin{
    display: flex;
    flex-direction: column;
    flex: 1;
    min-width: 0;
    overflow: hidden;
}

.admin-bar{
    display: flex;
    align-items: center;
    gap: 16px;
    height: 32px;
    flex: none;
    padding: 0 8px 0 7px;
    background: #23282d;
    color: #eee;
}
.admin-bar a{
    display: flex;
    align-items: center;
    gap: 5px;
    color: #eee;
}
.admin-bar svg{
    width: 20px;
    height: 20px;
    fill: #a0a5aa;
    color: #a0a5aa;
}
.admin-bar .muted{
    color: #999;
}
.admin-bar .howdy{
    gap: 7px;
    margin-left: auto;
}
.admin-bar .avatar{
    width: 18px;
    height: 18px;
}

.admin-body{
    display: flex;
    flex: 1;
    min-height: 0;
}

.sidebar{
    width: 160px;
    flex: none;
    padding-top: 12px;
    background: #23282d;
}
.sidebar > a{
    position: relative;
    display: flex;
    align-items: center;
    gap: 8px;
    height: 34px;
    padding: 0 0 2px 8px;
    font-size: 14px;
    color: #eee;
}
.sidebar svg{
    width: 20px;
    height: 20px;
    fill: #a0a5aa;
    color: #a0a5aa;
}
.sidebar .group{
    margin-top: 11px;
}
.sidebar .current{
    background: #0073aa;
    color: #fff;
}
.sidebar .current svg{
    fill: #fff;
}
.sidebar .current::after{
    content: "";
    position: absolute;
    right: 0;
    border: 8px solid transparent;
    border-right-color: #f1f1f1;
    border-left: 0;
}
.sidebar .collapse{
    gap: 6px;
    padding-bottom: 0;
    font-size: 13px;
    color: #a0a5aa;
}

.submenu{
    padding: 7px 12px 8px;
    background: #32373c;
}
.submenu a{
    display: block;
    line-height: 27px;
    color: #a0a5aa;
}
.submenu .selected{
    color: #fff;
    font-weight: 600;
}

.content{
    flex: 1;
    min-width: 0;
    padding: 0 20px 0 22px;
    background: #f1f1f1;
}

.page-head{
    display: flex;
    align-items: flex-start;
    height: 56px;
}
.page-head h1{
    padding-top: 17px;
    font-size: 23px;
    line-height: 32px;
    color: #23282d;
}
.add-new{
    margin: 21px auto 0 10px;
    padding: 0 8px;
    background: #e0e0e0;
    line-height: 26px;
    font-weight: 600;
}
.greeting{
    margin-right: 15px;
    font-size: 11px;
    line-height: 26px;
}
.meta-link{
    margin-left: 6px;
    padding: 0 16px;
    height: 29px;
    background: #fff;
    border: 1px solid #ddd;
    border-top: 0;
    color: #72777c;
    font-size: 13px;
}
.meta-link span{
    margin-left: 1px;
    font-size: 11px;
    color: #a0a5aa;
}

.filters{
    display: flex;
    align-items: center;
    height: 28px;
    margin-bottom: 9px;
}
.views{
    flex: 1;
    padding: 14px 0 0 2px;
}
.views span{
    color: #999;
}
.views .all{
    color: #111;
    font-weight: 600;
}

.field{
    height: 28px;
    padding: 0 6px;
    background: #fff;
    border: 1px solid #ddd;
    border-radius: 0;
    color: #32373c;
    font-size: 14px;
    box-shadow: inset 0 1px 2px rgba(0,0,0,.07);
}
select.field{
    appearance: none;
    background: #fff url('data:image/svg+xml,<svg xmlns="http://www.w3.org/2000/svg" width="7" height="7"><path d="M0 1h7L3.500 7z" fill="black"/></svg>') no-repeat right 6px top 10px;
}

.button{
    height: 28px;
    padding: 0 10px;
    background: #f7f7f7;
    border: 1px solid #ccc;
    border-radius: 3px;
    box-shadow: 0 1px 0 #ccc;
    color: #555;
    font-size: 13px;
}

.search{
    width: 170px;
    margin-right: 5px;
}

.table-nav{
    display: flex;
    align-items: center;
    gap: 6px;
    margin-bottom: 3px;
}
.bulk{
    width: 126px;
}
.dates{
    width: 140px;
    margin-left: 10px;
}
.count{
    margin-left: auto;
}

/* ---------- pages table ---------- */
.pages{
    width: 100%;
    table-layout: fixed;
    border-collapse: separate;
    border-spacing: 0;
    background: #fff;
    border: 1px solid #e1e1e1;
}
.pages th{
    height: 36px;
    padding: 0 10px;
    border-bottom: 1px solid #e1e1e1;
    font-size: 14px;
    font-weight: 400;
    text-align: left;
    color: #32373c;
}
.pages td{
    height: 91px;
    padding: 7px 10px 0;
    vertical-align: top;
    line-height: 19px;
    white-space: nowrap;
}
.pages .alternate td{
    height: 96px;
    background: #f9f9f9;
}
.pages .quick-edit td{
    height: auto;
    padding: 0 12px 7px;
    background: #f9f9f9;
}
.pages .col-check{
    width: 33px;
}
.col-author{
    width: 104px;
}
.col-comments{
    width: 87px;
}
.col-date{
    width: 114px;
}
.th-comment{
    width: 20px;
    height: 18px;
    margin-left: -2px;
    color: #444;
}

input[type="checkbox"]{
    display: block;
    appearance: none;
    flex: none;
    width: 16px;
    height: 16px;
    background: #fff;
    border: 1px solid #b4b9be;
}
.pages td > input[type="checkbox"]{
    margin-top: 2px;
}

.row-title{
    font-size: 14px;
    font-weight: 600;
}

.seo{
    height: 75px;
    overflow: hidden;
    line-height: 20px;
}
.seo svg{
    display: inline-block;
    width: 14px;
    height: 14px;
    margin: 0 2px 0 4px;
}

/* ---------- quick edit ---------- */
.edit-columns{
    display: grid;
    grid-template-columns: 1fr 1fr;
    gap: 12px;
}
.edit-left h2{
    padding: 6px 0 5px;
    font-size: 12px;
    line-height: 22px;
    color: #444;
}
.edit-row{
    display: flex;
    align-items: center;
    height: 33px;
}
.edit-left .edit-row .field{
    height: 27px;
}
.edit-row label, .edit-row em{
    font-size: 12px;
    font-style: italic;
}
.edit-row label{
    width: 73px;
    flex: none;
}
.edit-row .after{
    width: auto;
    margin-left: 7px;
}
.edit-row em{
    margin: 0 5px;
}
.wide{
    flex: 1;
    min-width: 0;
}
.focused{
    border-color: #5b9dd9;
    box-shadow: 0 0 2px rgba(30,140,190,.8);
}
.month{
    width: 79px;
    margin-right: 5px;
}
.edit-left .date-row .two, .edit-left .date-row .four{
    height: 25px;
    padding: 0 5px;
    font-size: 12px;
    color: #555;
}
.two{
    width: 28px;
}
.four{
    width: 42px;
}
.date-row span{
    width: 7px;
    text-align: center;
    font-size: 12px;
}
.date-row .at{
    width: 19px;
}
.password{
    width: 172px;
}

.edit-right{
    padding-top: 28px;
}
.edit-right .allow-row{
    height: 39px;
}
.parent{
    width: 241px;
}
.order{
    width: 84px;
}
.template{
    width: 144px;
}
.status{
    width: 134px;
}

.edit-actions{
    display: flex;
    justify-content: space-between;
    margin-top: 8px;
}
.primary{
    background: #00a0d2;
    border-color: #0073aa;
    box-shadow: none;
    color: #fff;
}

/* ---------- scrollbar ---------- */
.scrollbar{
    display: flex;
    flex-direction: column;
    align-items: center;
    width: 17px;
    flex: none;
    background: #f1f1f1;
    font-size: 7px;
    line-height: 17px;
    color: #777;
}
.thumb{
    width: 13px;
    height: 50%;
    background: #bcbcbc;
}
.down{
    margin-top: auto;
    color: #333;
}

/* ---------- taskbar ---------- */
.taskbar{
    display: flex;
    height: 40px;
    flex: none;
    background: #5f5f5f;
    border-top: 1px solid #444;
}
.start{
    width: 50px;
    margin-right: 2px;
}
.task{
    width: 58px;
    margin-right: 4px;
    border: 1px solid transparent;
}
.open{
    border-color: rgba(255,255,255,.35);
    background: rgba(255,255,255,.1);
}
.active{
    border-color: #c5c5c5;
    background: #9c9c9c;
}
.start svg, .task svg{
    width: 30px;
    height: 30px;
    margin: auto;
}
.light-group{
    position: relative;
    display: flex;
    background: #b9b9b9;
}
.light-group > button{
    position: relative;
}
.ghost{
    position: absolute;
    top: -4px;
    left: 24px;
    font-size: 14px;
    white-space: nowrap;
    color: #888;
}
.ghost-low{
    top: 30px;
    font-size: 9px;
}
.tray{
    display: flex;
    align-items: center;
    flex: 1;
    gap: 4px;
    padding: 0 16px 0 2px;
    background: #606060;
    color: #fff;
    font-size: 12px;
}
.tray svg{
    width: 20px;
    height: 20px;
}
.lang{
    margin-left: 8px;
}
.clock{
    margin-left: auto;
    text-align: center;
    line-height: 17px;
    font-size: 11px;
}

/* ---------- notes over the page ---------- */
.pointer{
    position: absolute;
    width: 44px;
    height: 36px;
}
.pointer-allow{
    top: 417px;
    left: 878px;
}
.pointer-update{
    top: 493px;
    right: 8px;
}
.note{
    position: absolute;
    font-family: "Noto Sans", sans-serif;
    font-size: 33px;
    font-weight: 600;
    line-height: 40px;
    white-space: nowrap;
    color: #f00000;
}
.note span{
    font-family: "DejaVu Sans", sans-serif;
    font-size: 31px;
    font-weight: 400;
    -webkit-text-stroke: 1px #f00000;
}
.note-allow{
    top: 437px;
    left: 925px;
}
.note-update{
    top: 572px;
    left: 1112px;
}
.watermark{
    position: absolute;
    top: 615px;
    left: 186px;
    display: flex;
    gap: 12px;
    white-space: nowrap;
    color: #465352;
}
.watermark-logo{
    width: 80px;
    height: 80px;
    background: #222;
    color: #808080;
    font-family: "DejaVu Sans", sans-serif;
    font-size: 42px;
    line-height: 82px;
    text-align: center;
    -webkit-text-stroke: 2px #808080;
}
.watermark-text{
    padding-top: 7px;
    font-family: "Noto Sans", sans-serif;
    font-size: 31px;
}
.watermark-text p{
    font-weight: 600;
    line-height: 36px;
}
.watermark-text .site{
    font-family: "DejaVu Sans", sans-serif;
    font-size: 28px;
    font-weight: 400;
    -webkit-text-stroke: 1px #465352;
}
```
